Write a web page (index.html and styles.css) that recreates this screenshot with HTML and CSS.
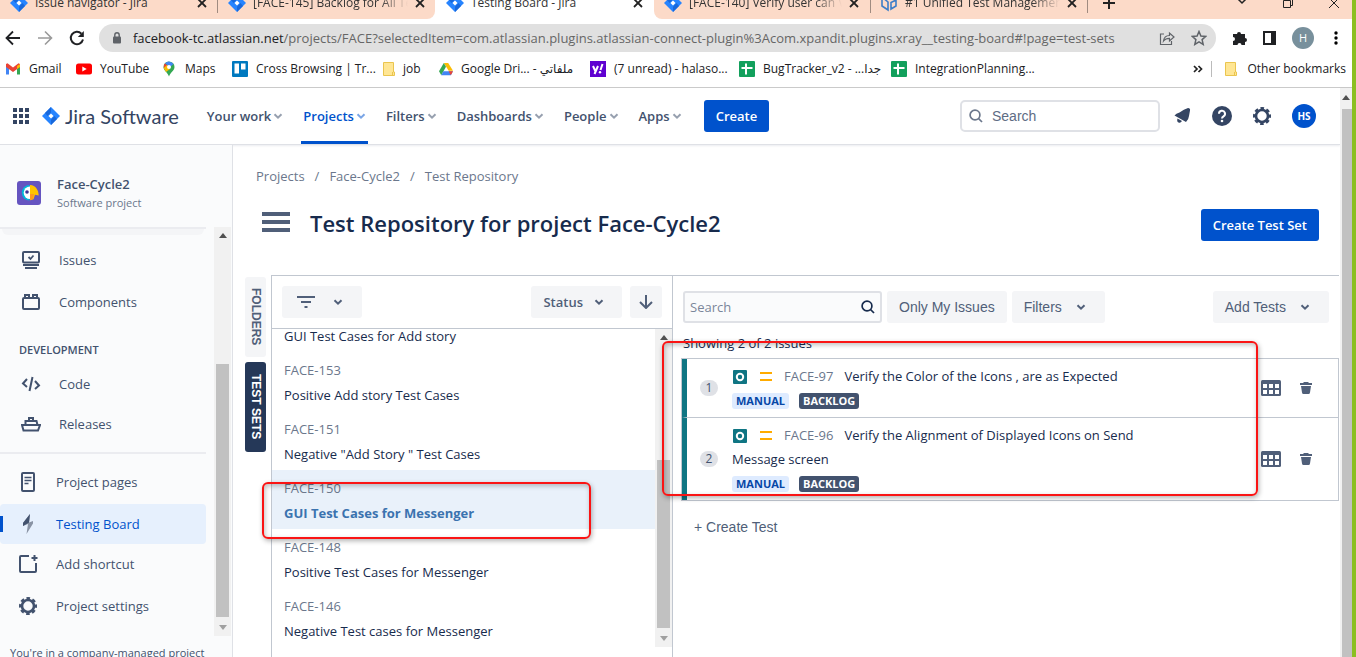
FILE: index.html
```html
<!DOCTYPE html>
<html lang="en">
<head>
<meta charset="utf-8">
<title>Testing Board - Jira</title>
<link rel="stylesheet" href="styles.css">
</head>
<body>
<svg class="defs" aria-hidden="true">
  <defs>
    <symbol id="jira" viewBox="0 0 18 18"><path d="M9 0L18 9L9 18L0 9z" fill="#2684ff"/><path d="M9 0v5.500L5.500 9L3 6z" fill="#1868db"/><path d="M9 18v-5.500L12.500 9L15 12z" fill="#1868db"/><path d="M9 6.500L11.500 9L9 11.500L6.500 9z" fill="#fff"/></symbol>
    <symbol id="close" viewBox="0 0 10 10"><path d="M1 1L9 9M9 1L1 9" stroke="#222" stroke-width="1.800" fill="none"/></symbol>
    <symbol id="chev" viewBox="0 0 10 10"><path d="M1.500 3.200L5 6.700L8.500 3.200" stroke="currentColor" stroke-width="2" fill="none"/></symbol>
    <symbol id="gear" viewBox="0 0 20 20"><circle cx="10" cy="10" r="6" fill="none" stroke="currentColor" stroke-width="2.600"/><circle cx="10" cy="10" r="7.800" fill="none" stroke="currentColor" stroke-width="2.400" stroke-dasharray="3.600 2.526" stroke-dashoffset="1.800"/></symbol>
    <symbol id="up" viewBox="0 0 8 5"><path d="M0 5L4 0L8 5z" fill="#505050"/></symbol>
    <symbol id="down" viewBox="0 0 8 5"><path d="M0 0L4 5L8 0z" fill="#a0a0a0"/></symbol>
    <symbol id="sheet" viewBox="0 0 16 16"><rect width="16" height="16" rx="1" fill="#12a05c"/><path d="M2.500 7h11M7 2.500v11" stroke="#fff" stroke-width="2"/></symbol>
    <symbol id="folder" viewBox="0 0 12 14"><path d="M.5.5h10v9.500h1v3.500H.5z" fill="#ffe694" stroke="#eac54f"/><path d="M9.500 13.500v-3.500" stroke="#eac54f"/></symbol>
    <symbol id="mag" viewBox="0 0 14 14"><circle cx="6" cy="6" r="4.900" fill="none" stroke="currentColor" stroke-width="1.700"/><path d="M9.500 9.500L13 13" stroke="currentColor" stroke-width="1.700"/></symbol>
    <symbol id="grid" viewBox="0 0 20 16"><rect width="20" height="16" rx="1.500" fill="#505f79"/><path d="M2 4h4v4H2zM8 4h4v4H8zM14 4h4v4h-4zM2 10h4v4H2zM8 10h4v4H8zM14 10h4v4h-4z" fill="#fff"/></symbol>
    <symbol id="trash" viewBox="0 0 12 12"><path d="M0 1h3.500V0h5v1H12v2H0zM1 4h10l-1 6.500Q9.800 12 8.500 12h-5Q2.200 12 2 10.500z" fill="#505f79"/></symbol>
    <symbol id="test" viewBox="0 0 14 14"><rect width="14" height="14" rx="1" fill="#0f7583"/><circle cx="7" cy="7" r="3.200" fill="none" stroke="#fff" stroke-width="2"/></symbol>
    <symbol id="prio" viewBox="0 0 12 9"><path d="M0 1h12M0 8h12" stroke="#ffab00" stroke-width="2"/></symbol>
  </defs>
</svg>
<div class="screen">
  <div class="browser">
    <div class="tabs">
      <div class="tab t1"><svg class="i18"><use href="#jira"/></svg><span>Issue navigator - Jira</span><svg class="i10"><use href="#close"/></svg></div>
      <div class="tab t2 sep"><svg class="i18"><use href="#jira"/></svg><span class="fade">[FACE-145] Backlog for All Test</span><svg class="i10"><use href="#close"/></svg></div>
      <div class="tab t3"><svg class="i18"><use href="#jira"/></svg><span>Testing Board - Jira</span><svg class="i10"><use href="#close"/></svg></div>
      <div class="tab t4"><svg class="i18"><use href="#jira"/></svg><span class="fade">[FACE-140] Verify user can View</span><svg class="i10"><use href="#close"/></svg></div>
      <div class="tab t5 sep"><svg class="i18" viewBox="0 0 18 18"><path d="M2 3v9l6 4V8zM16 3v9l-5 3V8.500L16 6" fill="none" stroke="#3d7dc8" stroke-width="1.600"/></svg><span class="fade">#1 Unified Test Management</span><svg class="i10"><use href="#close"/></svg></div>
      <div class="tab plus sep"><svg class="i12" viewBox="0 0 12 12"><path d="M6 0v12M0 6h12" stroke="#222" stroke-width="2"/></svg></div>
      <div class="winbtns">
        <svg class="i10" viewBox="0 0 10 10"><path d="M1 1L5 5L9 1" fill="none" stroke="#222" stroke-width="1.500"/></svg>
        <svg class="i10" viewBox="0 0 10 10"><path d="M.5 2.500h7v7h-7zM2.500 2V.5h7v7H8" fill="none" stroke="#222"/></svg>
        <svg class="i10" viewBox="0 0 10 10"><path d="M0 0L10 10M10 0L0 10" stroke="#222"/></svg>
      </div>
    </div>
    <div class="toolbar">
      <svg class="i16" viewBox="0 0 16 16"><path d="M15 8H2M8 1.500L1.500 8L8 14.500" fill="none" stroke="#202124" stroke-width="1.800"/></svg>
      <svg class="i16" viewBox="0 0 16 16"><path d="M1 8h13M8 1.500L14.500 8L8 14.500" fill="none" stroke="#9a9a9a" stroke-width="1.600"/></svg>
      <svg class="i16" viewBox="0 0 16 16"><path d="M14 9.500A6.200 6.200 0 1 1 12.400 3.600" fill="none" stroke="#202124" stroke-width="2"/><path d="M14.800 1v6H8.800z" fill="#202124"/></svg>
      <div class="url">
        <svg class="lock" viewBox="0 0 10 12"><rect x="1" y="4.500" width="8" height="7" rx="1" fill="#5f6368"/><path d="M2.800 5V3a2.200 2.200 0 0 1 4.400 0v2" fill="none" stroke="#5f6368" stroke-width="1.400"/></svg>
        <span class="address"><b>facebook-tc.atlassian.net</b>/projects/FACE?selectedItem=com.atlassian.plugins.atlassian-connect-plugin%3Acom.xpandit.plugins.xray__testing-board#!page=test-sets</span>
        <svg class="i16" viewBox="0 0 16 16"><path d="M5 4H1.500v10.500h11V11M4.500 11c.5-4 3-5.500 6-5.500V3l4.500 4-4.500 4V8.300C8 8.300 6 9 4.500 11z" fill="none" stroke="#5f6368" stroke-width="1.200"/></svg>
        <svg class="i16" viewBox="0 0 16 16"><path d="M8 1.500l1.900 4.500 4.900.4-3.700 3.200 1.100 4.800L8 11.900l-4.200 2.500 1.100-4.800L1.200 6.400 6.100 6z" fill="none" stroke="#5f6368" stroke-width="1.500"/></svg>
      </div>
      <div class="tools">
        <svg class="i16" viewBox="0 0 16 16"><path d="M1 4h4a2 2 0 1 1 4 0h4v4a2 2 0 1 1 0 4v3H9.500a2 2 0 1 0-4 0H1v-4a2 2 0 1 0 0-4z" fill="#202124"/></svg>
        <svg class="i16" viewBox="0 0 16 16"><path d="M2 2h11v12H2z" fill="none" stroke="#202124" stroke-width="2"/><path d="M9 2h5v12H9z" fill="#202124"/></svg>
        <span class="me">H</span>
        <svg class="i16" viewBox="0 0 16 16"><circle cx="8" cy="3" r="1.700"/><circle cx="8" cy="8" r="1.700"/><circle cx="8" cy="13" r="1.700"/></svg>
      </div>
    </div>
    <nav class="bookmarks">
      <a href="#"><svg class="i16" viewBox="0 0 16 16"><path d="M1 13.500V4h3v9.500z" fill="#4285f4"/><path d="M12 13.500V4h3v9.500z" fill="#34a853"/><path d="M1 3l1.500-.8L8 6.600l5.500-4.400L15 3v3L8 11 1 6z" fill="#ea4335"/><path d="M12 5l3-2v3l-3 2z" fill="#fbbc04"/></svg>Gmail</a>
      <a href="#"><svg class="i16" viewBox="0 0 16 16"><rect y="2.500" width="16" height="11" rx="2.500" fill="#f00"/><path d="M6.300 5.500L10.700 8L6.300 10.500z" fill="#fff"/></svg>YouTube</a>
      <a href="#" class="maps"><svg class="pin" viewBox="0 0 12 16"><path d="M6 .5A5.500 5.500 0 0 1 11.500 6C11.500 10 7.500 11 6 15.500 4.500 11 .5 10 .5 6A5.500 5.500 0 0 1 6 .5z" fill="#34a853"/><path d="M.7 7A5.500 5.500 0 0 1 2 2.300L5 5z" fill="#ea4335"/><path d="M2 2.300A5.500 5.500 0 0 1 10.500 3L7 6z" fill="#4285f4"/><path d="M.7 7L4 4l3 4-4 3z" fill="#fbbc04"/><circle cx="6" cy="6" r="2" fill="#fff"/></svg>Maps</a>
      <a href="#"><svg class="i16" viewBox="0 0 16 16"><rect width="16" height="16" rx="1" fill="#0079bf"/><path d="M2.500 2.500h4.500v10H2.500zM9 2.500h4.500v6H9z" fill="#fff"/></svg>Cross Browsing | Tr...</a>
      <a href="#"><svg class="i12"><use href="#folder"/></svg>job</a>
      <a href="#"><svg class="i14" viewBox="0 0 16 14"><path d="M5.500 0h5L16 9h-5z" fill="#fbbc04"/><path d="M5.500 0L8 4.300 2.600 14 0 9.500z" fill="#34a853"/><path d="M5 9.500h11L13.500 14h-11z" fill="#4285f4"/><path d="M11 9.500h5L13.500 14z" fill="#ea4335"/></svg>Google Dri... - ملفاتي</a>
      <a href="#"><svg class="i16" viewBox="0 0 16 16"><rect width="16" height="16" fill="#5f01d1"/><path d="M3 5l2.300 5M8 5l-3.500 8M12.500 3l-2 6" stroke="#fff" stroke-width="2"/><circle cx="10" cy="11.300" r="1.200" fill="#fff"/></svg>(7 unread) - halaso...</a>
      <a href="#"><svg class="i16"><use href="#sheet"/></svg>BugTracker_v2 - ...جدا</a>
      <a href="#"><svg class="i16"><use href="#sheet"/></svg>IntegrationPlanning...</a>
      <div class="more"><svg class="i10" viewBox="0 0 10 10"><path d="M1 2l3 3-3 3M5.500 2l3 3-3 3" fill="none" stroke="#222" stroke-width="1.700"/></svg><a class="other" href="#"><svg class="i12"><use href="#folder"/></svg>Other bookmarks</a></div>
    </nav>

    <div class="viewport">
      <div class="app">
        <header class="top">
          <svg class="i16 apps" viewBox="0 0 16 16"><path d="M0 0h4v4H0zM6 0h4v4H6zM12 0h4v4h-4zM0 6h4v4H0zM6 6h4v4H6zM12 6h4v4h-4zM0 12h4v4H0zM6 12h4v4H6zM12 12h4v4h-4z" fill="#344563"/></svg>
          <a class="brand" href="#"><svg class="i18"><use href="#jira"/></svg>Jira Software</a>
          <nav class="menu">
            <a href="#">Your work<svg class="i10"><use href="#chev"/></svg></a>
            <a href="#" class="on">Projects<svg class="i10"><use href="#chev"/></svg></a>
            <a href="#">Filters<svg class="i10"><use href="#chev"/></svg></a>
            <a href="#">Dashboards<svg class="i10"><use href="#chev"/></svg></a>
            <a href="#">People<svg class="i10"><use href="#chev"/></svg></a>
            <a href="#">Apps<svg class="i10"><use href="#chev"/></svg></a>
          </nav>
          <button class="primary">Create</button>
          <label class="search"><svg class="i14"><use href="#mag"/></svg><input type="text" placeholder="Search" aria-label="Search Jira"></label>
          <div class="acts">
            <svg class="i20" viewBox="0 0 20 20"><path d="M16 2Q18.500 2 18 4.500L17 10q-.3 3.500-3 6L2.500 9.500Q4 7.500 7.500 6.500Q12 3 16 2z" fill="#344563"/><path d="M5.500 12.500l4.500 2.500q-1.500 2.500-3.500 1.500t-1-4z" fill="#344563"/></svg>
            <svg class="i20" viewBox="0 0 20 20"><circle cx="10" cy="10" r="10" fill="#344563"/><path d="M7 7.800a3 3 0 1 1 4.500 2.500Q10 11.200 10 12.500" fill="none" stroke="#fff" stroke-width="2"/><circle cx="10" cy="15" r="1.300" fill="#fff"/></svg>
            <svg class="i20 dark"><use href="#gear"/></svg>
            <span class="avatar">HS</span>
          </div>
        </header>
        <div class="body">
          <aside class="side">
            <div class="project">
              <svg class="i24" viewBox="0 0 24 24"><rect width="24" height="24" rx="3" fill="#6554c0"/><path d="M12.500 4a7.700 7.700 0 0 0 0 15.400z" fill="#00b8d9"/><path d="M13 5.500a6.300 6.300 0 0 0 0 12.600z" fill="#fff"/><path d="M13 4c6 .5 8.500 5 8.700 10.500L18 13.800l-1.500 4.500-3.500 1z" fill="#ffc400"/><path d="M13 13h4l-1 5-3 1.300z" fill="#ff991f"/><circle cx="10" cy="11" r="1.800" fill="#403294"/></svg>
              <div><strong>Face-Cycle2</strong><small>Software project</small></div>
            </div>
            <div class="sidescroll">
              <nav class="items">
                <div class="stub"></div>
                <a href="#"><svg class="i20" viewBox="0 0 20 20"><rect x="2" y="2" width="16" height="10.500" rx="1" fill="none" stroke="currentColor" stroke-width="2"/><path d="M7.500 7l2 2 3-3.500" fill="none" stroke="currentColor" stroke-width="1.800"/><path d="M2 15h16M4 18h12" stroke="currentColor" stroke-width="1.800"/></svg>Issues</a>
                <a href="#" class="gap"><svg class="i20" viewBox="0 0 20 20"><rect x="2" y="6" width="16" height="11" rx="1" fill="none" stroke="currentColor" stroke-width="2"/><path d="M4 6V3h4v3M12 6V3h4v3" fill="none" stroke="currentColor" stroke-width="2"/></svg>Components</a>
                <h2>DEVELOPMENT</h2>
                <a href="#"><svg class="i20" viewBox="0 0 20 20"><path d="M6 5L2 9.500L6 13M14 7l4 4.500L14 15M11.500 3L8.500 17" fill="none" stroke="currentColor" stroke-width="2"/></svg>Code</a>
                <a href="#"><svg class="i20" viewBox="0 0 20 20"><path d="M1 11h18l-2 5.500H2.500zM4.500 11V7h11l1 4M8 7V4h4v3" fill="none" stroke="currentColor" stroke-width="2"/></svg>Releases</a>
                <hr>
                <a href="#" class="lower"><svg class="i20" viewBox="0 0 20 20"><rect x="4" y="1" width="12" height="18" rx="1" fill="none" stroke="currentColor" stroke-width="2"/><path d="M6.500 5.500h7M6.500 8.500h7M6.500 11.500h4" stroke="currentColor" stroke-width="1.700"/></svg>Project pages</a>
                <a href="#" class="lower on gap"><svg class="i20" viewBox="0 0 20 20"><path d="M12 0L5 9v3l5-2-1.500 10L15 9.500V7l-4 1.500z" fill="#8993a4"/><path d="M12 0L5 9v3l6-3.500z" fill="#42526e"/></svg>Testing Board</a>
                <a href="#" class="lower"><svg class="i20" viewBox="0 0 20 20"><path d="M11 2H3Q2 2 2 3v14q0 1 1 1h14q1 0 1-1V9M16.500 1v6M13.500 4h6" fill="none" stroke="currentColor" stroke-width="2"/></svg>Add shortcut</a>
                <a href="#" class="lower gap"><svg class="i20"><use href="#gear"/></svg>Project settings</a>
              </nav>
              <div class="bar barside"><svg><use href="#up"/></svg><i></i><svg><use href="#down"/></svg></div>
            </div>
            <p class="foot">You're in a company-managed project</p>
          </aside>
          <main class="main">
            <nav class="crumbs"><a href="#">Projects</a><span>/</span><a href="#">Face-Cycle2</a><span>/</span><a href="#">Test Repository</a></nav>
            <div class="titlebar">
              <svg class="burger" viewBox="0 0 28 20"><path d="M0 2h28M0 10h28M0 18h28" stroke="#505f79" stroke-width="4"/></svg>
              <h1>Test Repository for project Face-Cycle2</h1>
              <button class="primary">Create Test Set</button>
            </div>
            <div class="work">
              <div class="vtabs"><button>FOLDERS</button><button class="on">TEST SETS</button></div>
              <section class="left">
                <div class="lefttools">
                  <button class="grey filter" aria-label="Filter"><svg class="i18" viewBox="0 0 18 18"><path d="M0 4h18M4 9h10M7.500 14h3" stroke="currentColor" stroke-width="2"/></svg><svg class="i10"><use href="#chev"/></svg></button>
                  <button class="grey status">Status<svg class="i10"><use href="#chev"/></svg></button>
                  <button class="grey sort" aria-label="Sort"><svg class="i14" viewBox="0 0 14 14"><path d="M7 0v13M1 7l6 6 6-6" fill="none" stroke="currentColor" stroke-width="2"/></svg></button>
                </div>
                <div class="listwrap">
                  <ul class="list">
                    <li>GUI Test Cases for Add story</li>
                    <li><span>FACE-153</span>Positive Add story Test Cases</li>
                    <li><span>FACE-151</span>Negative "Add Story " Test Cases</li>
                    <li class="on"><span>FACE-150</span><b>GUI Test Cases for Messenger</b></li>
                    <li><span>FACE-148</span>Positive Test Cases for Messenger</li>
                    <li><span>FACE-146</span>Negative Test cases for Messenger</li>
                  </ul>
                  <div class="bar barlist"><svg><use href="#up"/></svg><i></i><svg><use href="#down"/></svg></div>
                </div>
              </section>
              <section class="right">
                <div class="righttools">
                  <label class="find"><input type="text" placeholder="Search" aria-label="Search tests"><svg class="i14"><use href="#mag"/></svg></label>
                  <button class="grey arial">Only My Issues</button>
                  <button class="grey arial wide">Filters<svg class="i10"><use href="#chev"/></svg></button>
                  <button class="grey arial wide add">Add Tests<svg class="i10"><use href="#chev"/></svg></button>
                </div>
                <p class="count">Showing 2 of 2 issues</p>
                <ol class="tests">
                  <li><span class="num">1</span>
                    <div class="info"><p><svg class="i14"><use href="#test"/></svg><svg class="prio"><use href="#prio"/></svg><a href="#">FACE-97</a>Verify the Color of the Icons , are as Expected</p>
                    <div class="tags"><span>MANUAL</span><span class="dk">BACKLOG</span></div></div>
                    <svg class="gridi"><use href="#grid"/></svg><svg class="i12"><use href="#trash"/></svg></li>
                  <li><span class="num">2</span>
                    <div class="info"><p><svg class="i14"><use href="#test"/></svg><svg class="prio"><use href="#prio"/></svg><a href="#">FACE-96</a>Verify the Alignment of Displayed Icons on Send Message screen</p>
                    <div class="tags"><span>MANUAL</span><span class="dk">BACKLOG</span></div></div>
                    <svg class="gridi"><use href="#grid"/></svg><svg class="i12"><use href="#trash"/></svg></li>
                </ol>
                <button class="link">+ Create Test</button>
              </section>
            </div>
          </main>
        </div>
      </div>
      <div class="bar barpage"><svg><use href="#up"/></svg><i></i></div>
    </div>
  </div>
  <div class="edge"></div>
  <div class="mark mark-set"></div>
  <div class="mark mark-tests"></div>
</div>
</body>
</html>
```
FILE: styles.css
```css
* { box-sizing: border-box; }
body { margin: 0; font: 13px/20px "Open Sans", "DejaVu Sans", sans-serif; color: #172b4d; }
a { color: inherit; text-decoration: none; }
button, input { font: inherit; color: inherit; border: 0; margin: 0; }
p, h1, h2, ul, ol { margin: 0; padding: 0; list-style: none; }
svg { flex: none; display: block; }
.defs { position: absolute; width: 0; height: 0; }
.i10 { width: 10px; height: 10px; }
.i12 { width: 12px; height: 14px; }
.i14 { width: 14px; height: 14px; }
.i16 { width: 16px; height: 16px; }
.i18 { width: 18px; height: 18px; }
.i20 { width: 20px; height: 20px; }
.i24 { width: 24px; height: 24px; }

.screen { position: relative; display: flex; height: 100vh; overflow: hidden; background: #fff; }
.browser { flex: 1; min-width: 0; display: flex; flex-direction: column; }
.edge { width: 4px; background: #8bbf21; }

.tabs { flex: none; height: 19px; overflow: hidden; display: flex; align-items: flex-end; background: #fff; font-size: 12px; color: #333; }
.tab { flex: none; display: flex; align-items: center; gap: 7px; height: 32px; padding: 0 8px; background: #fcdac8; white-space: nowrap; }
.tab span { flex: 1; min-width: 0; overflow: hidden; }
.fade { -webkit-mask-image: linear-gradient(90deg, #000 82%, transparent); mask-image: linear-gradient(90deg, #000 82%, transparent); }
.t1 { width: 217px; padding-left: 10px; padding-right: 10px; }
.t2 { width: 218px; padding-left: 11px; padding-right: 10px; border-radius: 0 0 8px 0; }
.t3 { width: 219px; padding: 0 11px; background: #fff; }
.t4 { width: 216px; padding-left: 10px; padding-right: 11px; border-radius: 0 0 0 8px; }
.t5 { width: 217px; padding-left: 10px; padding-right: 10px; }
.sep { background-image: linear-gradient(#a08b80, #a08b80); background-size: 1px 26px; background-repeat: no-repeat; }
.plus { padding: 0 16px; }
.winbtns { flex: 1; height: 32px; display: flex; align-items: center; justify-content: flex-end; gap: 36px; padding-right: 13px; background: #fcdac8; }

.toolbar { flex: none; height: 37px; display: flex; align-items: center; gap: 16px; padding-left: 5px; }
.url { flex: 1; min-width: 0; height: 28px; margin-left: -2px; padding: 0 9px 0 13px; border-radius: 14px; background: #e0e0e0; display: flex; align-items: center; gap: 16px; color: #666; }
.address { flex: 1; min-width: 0; overflow: hidden; white-space: nowrap; }
.address b { font-weight: 400; color: #202124; }
.lock { width: 10px; height: 12px; margin-right: -5px; }
.tools { display: flex; align-items: center; gap: 14px; padding: 0 8px 0 0; }
.me { width: 22px; height: 22px; border-radius: 50%; background: #78909c; color: #fff; font-size: 11px; line-height: 22px; text-align: center; }

.bookmarks { flex: none; height: 32px; padding: 0 6px 6px 5px; border-bottom: 1px solid #c8c8c8; display: grid; grid-template-columns: 71px 87px 69px 151px 56px 151px 149px 152px 160px 1fr; align-items: center; font-size: 12px; color: #202124; white-space: nowrap; }
.bookmarks a { display: flex; align-items: center; gap: 8px; }
.bookmarks .maps { gap: 10px; }
.pin { width: 12px; height: 16px; }
.more { display: flex; justify-content: flex-end; align-items: center; gap: 8px; }
.bookmarks .other { border-left: 1px solid #bbb; padding-left: 13px; gap: 10px; line-height: 16px; }

.viewport { flex: 1; min-height: 0; display: flex; }
.app { flex: 1; min-width: 0; display: flex; flex-direction: column; }
.bar { flex: none; display: flex; flex-direction: column; align-items: center; background: #f1f1f1; padding: 6px 0; gap: 8px; }
.bar svg { width: 8px; height: 5px; }
.bar i { flex: 1; align-self: stretch; margin: 0 2px; background: #c1c1c1; }
.barpage { width: 12px; padding: 7px 0 0; gap: 9px; }
.barpage i { margin: 0 0 0 2px; }

.top { flex: none; height: 57px; border-bottom: 1px solid #dfe1e6; box-shadow: 0 1px 2px #ebecf0; display: flex; align-items: center; padding: 0 24px 0 13px; }
.brand { display: flex; align-items: center; gap: 5px; margin: 0 26px 0 13px; font: 20px/24px Lato, sans-serif; color: #344563; white-space: nowrap; }
.menu { align-self: stretch; display: flex; gap: 16px; font-weight: 600; color: #42526e; white-space: nowrap; }
.menu a { display: flex; align-items: center; gap: 2px; padding: 3px 2px 0; border-bottom: 3px solid transparent; }
.menu svg { color: #97a0af; }
.menu .on { color: #0052cc; border-color: #0052cc; }
.menu .on svg { color: #7aa5e6; }
.primary { flex: none; height: 32px; padding: 0 12px; border-radius: 3px; background: #0052cc; color: #fff; font-weight: 600; white-space: nowrap; }
.top .primary { margin-left: 20px; }
.search { width: 200px; height: 32px; margin-left: auto; border: 2px solid #dfe1e6; border-radius: 5px; display: flex; align-items: center; gap: 9px; padding: 0 7px; color: #6b778c; }
.search input { width: 100%; min-width: 0; padding: 0; background: none; outline: 0; font: 14px/20px "Liberation Sans", Arial, sans-serif; }
input::placeholder { color: #7a869a; opacity: 1; }
.search input::placeholder { color: #5e6c84; }
.acts { display: flex; align-items: center; gap: 20px; margin-left: 12px; }
.dark { color: #344563; }
.avatar { width: 24px; height: 24px; border-radius: 50%; background: #0052cc; color: #fff; font-size: 10px; font-weight: 700; line-height: 24px; text-align: center; }

.body { flex: 1; min-height: 0; display: flex; }
.side { flex: none; width: 233px; background: #fafbfc; border-right: 1px solid #dfe1e6; display: flex; flex-direction: column; padding-top: 30px; }
.project { flex: none; display: flex; align-items: center; gap: 16px; height: 52px; padding: 0 17px 16px; }
.project div { display: grid; }
.project strong { font-weight: 600; color: #42526e; line-height: 20px; }
.project small { font-size: 11px; line-height: 18px; color: #6b778c; white-space: nowrap; }
.sidescroll { flex: 1; min-height: 0; display: flex; justify-content: space-between; overflow: hidden; }
.items { width: 206px; border-top: 2px solid #ebecf0; color: #42526e; }
.stub { height: 6px; margin: 0 2px 5px; background: #f4f5f7; border-radius: 0 0 8px 8px; }
.items a { display: flex; align-items: center; gap: 18px; height: 40px; padding-left: 21px; white-space: nowrap; }
.items .gap { margin-top: 2px; }
.items .lower { padding-left: 18px; }
.items .on { background: #e6f0fd; color: #0052cc; border-radius: 4px; background-image: linear-gradient(#0052cc, #0052cc); background-size: 3px 16px; background-position: 0 50%; background-repeat: no-repeat; }
.items h2 { margin: 18px 0 4px 19px; font-size: 11px; line-height: 20px; font-weight: 600; color: #42526e; }
.items hr { margin: 8px 0; border: 0; height: 2px; background: #ebecf0; }
.barside { width: 17px; margin-right: 1px; }
.barside i { margin-top: 118px; }
.foot { flex: none; height: 21px; padding: 7px 0 0 10px; font-size: 11px; line-height: 20px; color: #42526e; overflow: hidden; white-space: nowrap; }

.main { flex: 1; min-width: 0; display: flex; flex-direction: column; padding: 21px 1px 0 12px; }
.crumbs { display: flex; gap: 10px; padding-left: 11px; color: #6b778c; }
.titlebar { display: flex; align-items: flex-start; gap: 20px; height: 32px; margin: 23px 20px 34px 17px; }
.burger { width: 28px; height: 20px; margin-top: 3px; }
h1 { flex: 1; font-size: 22px; line-height: 28px; font-weight: 600; color: #172b4d; white-space: nowrap; }
.work { flex: 1; min-height: 0; display: flex; }
.vtabs { width: 26px; padding-top: 2px; display: flex; flex-direction: column; gap: 5px; }
.vtabs button { writing-mode: vertical-rl; width: 21px; height: 80px; padding: 0; border-radius: 3px; background: #f4f5f7; color: #505f79; font: 700 12px/21px "Liberation Sans", Arial, sans-serif; text-align: center; }
.vtabs .on { height: 90px; background: #253858; color: #fff; }
.left { flex: none; width: 402px; border: 1px solid #c1c7d0; border-bottom: 0; display: flex; flex-direction: column; }
.lefttools { flex: none; display: flex; align-items: center; gap: 8px; height: 53px; padding: 0 10px; border-bottom: 1px solid #c1c7d0; }
.grey { flex: none; display: flex; align-items: center; justify-content: center; gap: 18px; height: 32px; padding: 0 12px; border-radius: 3px; background: #f4f5f7; color: #505f79; font-weight: 600; white-space: nowrap; }
.filter { width: 80px; margin-right: auto; padding: 0 4px 0 0; }
.status { gap: 11px; padding: 0 18px 0 12px; }
.sort { width: 32px; padding: 0; }
.listwrap { flex: 1; min-height: 0; display: flex; margin-bottom: 10px; }
.list { flex: 1; display: flex; flex-direction: column; justify-content: flex-end; overflow: hidden; }
.list li { flex: none; height: 59px; padding: 6px 12px; line-height: 25px; white-space: nowrap; }
.list li:first-child { height: 23px; padding: 0 12px; line-height: 14px; }
.list span { display: block; color: #6b778c; }
.list .on { background: #e9f1fa; }
.list b { color: #3b73af; font-weight: 700; }
.barlist { width: 17px; }
.barlist i { margin-top: 112px; }
.right { flex: 1; min-width: 0; border-top: 1px solid #c1c7d0; padding: 15px 0 0 8px; }
.righttools { display: flex; gap: 5px; padding: 0 10px 0 2px; }
.find { width: 199px; height: 32px; border: 2px solid #dfe1e6; border-radius: 3px; background: #fafbfc; display: flex; align-items: center; padding: 0 5px; }
.find input { flex: 1; min-width: 0; padding: 0; background: none; outline: 0; }
.arial { font: 14px/20px "Liberation Sans", Arial, sans-serif; }
.wide { gap: 14px; padding-right: 19px; }
.add { margin-left: auto; }
.count { padding: 10px 0 5px 2px; }
.tests { border: 1px solid #c1c7d0; }
.tests li { display: flex; align-items: center; border-left: 5px solid #0f7583; padding: 0 26px 0 13px; }
.tests li + li { border-top: 1px solid #c1c7d0; }
.num { width: 18px; height: 16px; border-radius: 8px; background: #dfe1e6; color: #42526e; font-size: 12px; line-height: 16px; text-align: center; }
.info { flex: 1; min-width: 0; padding: 5px 80px 4px 14px; line-height: 24px; }
.info p svg { display: inline-block; vertical-align: -3px; margin: 0 13px 0 1px; }
.info p .prio { width: 12px; height: 9px; vertical-align: 0; margin: 0 12px 0 0; }
.info a { color: #6b778c; margin-right: 11px; }
.tags { display: flex; align-items: center; gap: 10px; height: 24px; margin-top: 1px; }
.tags span { padding: 0 4px; border-radius: 3px; background: #deebff; color: #0747a6; font-size: 11px; font-weight: 700; line-height: 16px; }
.tags .dk { background: #42526e; color: #fff; }
.gridi { width: 20px; height: 16px; margin-right: 19px; }
.tests .i12 { height: 12px; }
.link { margin: 16px 0 0 13px; padding: 0; background: none; color: #505f79; font: 14px/20px "Liberation Sans", Arial, sans-serif; }

.mark { position: absolute; border: 2px solid #fa1414; border-radius: 6px; box-shadow: 1px 2px 5px rgba(0,0,0,.3), inset 1px 2px 5px rgba(0,0,0,.25); }
.mark-set { left: 262px; top: 482px; width: 329px; height: 57px; }
.mark-tests { left: 662px; top: 341px; width: 596px; height: 155px; }
```
